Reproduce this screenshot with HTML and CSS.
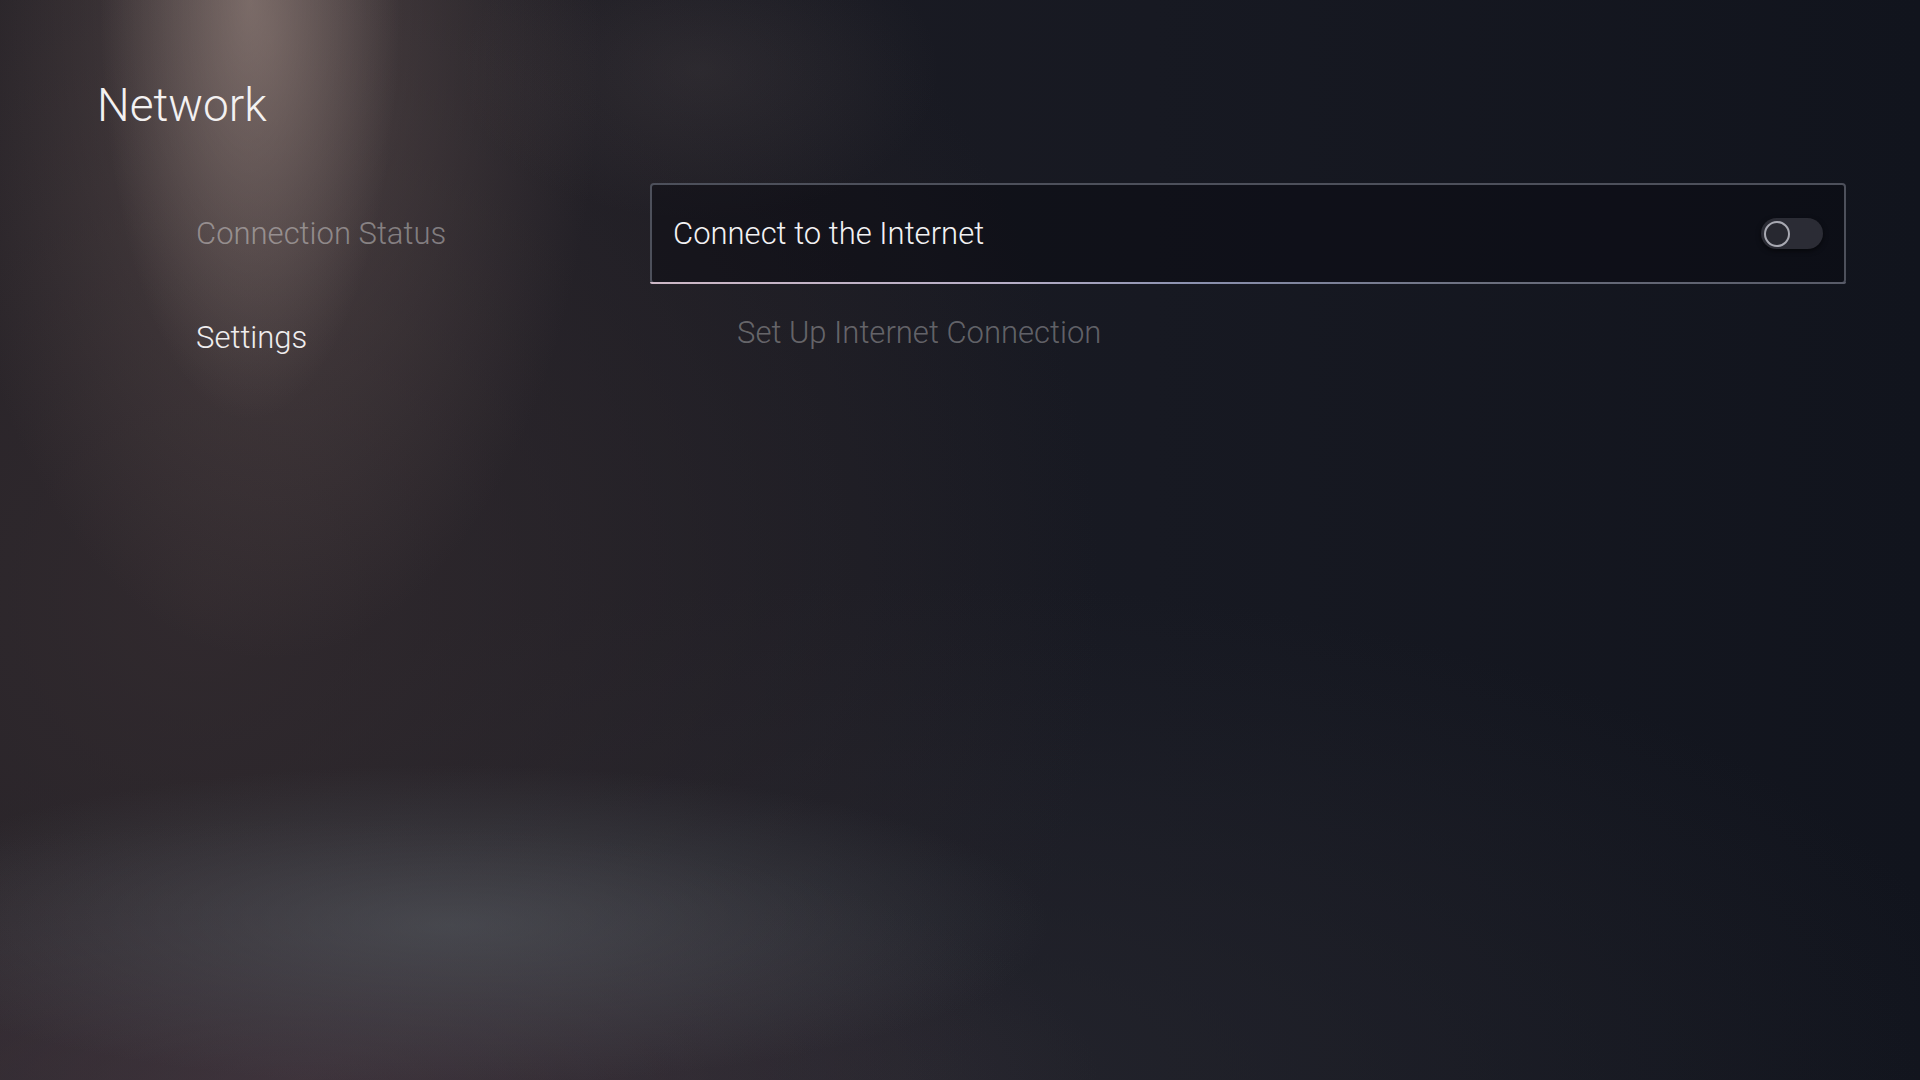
FILE: index.html
```html
<!DOCTYPE html>
<html lang="en">
<head>
    <meta charset="UTF-8">
    <meta name="viewport" content="width=device-width, initial-scale=1.0">
    <title>Network</title>
    <link rel="stylesheet" href="styles.css">
</head>
<body>

    <div class="screen">
        <h1 class="page-title">Network</h1>

        <div class="layout">
            <ul class="side-nav">
                <li class="nav-item dim">Connection Status</li>
                <li class="nav-item active">Settings</li>
            </ul>

            <div class="content">
                <div class="option-row focused">
                    <span class="option-label">Connect to the Internet</span>
                    <span class="toggle"><span class="knob"></span></span>
                </div>
                <div class="option-sub">Set Up Internet Connection</div>
            </div>
        </div>
    </div>

</body>
</html>
```

FILE: styles.css
```css
html, body {
    margin: 0;
    height: 100%;
}
body {
    font-family: Roboto, "Open Sans", "Liberation Sans", sans-serif;
    font-weight: 300;
    color: #f0eff1;
    background-color: #141721;
    background-image:
        radial-gradient(ellipse 150px 420px at 250px 0px, rgba(170,150,142,0.5), rgba(170,150,142,0) 100%),
        radial-gradient(ellipse 330px 620px at 270px 40px, rgba(120,100,96,0.5), rgba(120,100,96,0) 100%),
        radial-gradient(ellipse 240px 150px at 700px 70px, rgba(120,106,104,0.16), rgba(120,106,104,0) 100%),
        radial-gradient(ellipse 600px 160px at 450px 925px, rgba(92,100,106,0.5), rgba(92,100,106,0) 100%),
        radial-gradient(ellipse 800px 260px at 300px 1080px, rgba(80,64,74,0.55), rgba(80,64,74,0) 100%),
        radial-gradient(ellipse 900px 900px at 200px 600px, rgba(52,44,48,0.85), rgba(52,44,48,0) 100%),
        radial-gradient(ellipse 1100px 500px at 900px 1080px, rgba(40,40,48,0.7), rgba(40,40,48,0) 100%),
        linear-gradient(90deg, #1f1d23 0%, #171922 60%, #11141d 100%);
    overflow: hidden;
}
.screen {
    padding: 0 74px 0 97px;
}
.page-title {
    margin: 77px 0 0;
    font-size: 46px;
    font-weight: 300;
    line-height: 56px;
    color: #f3f1f1;
}
.layout {
    display: flex;
    margin-top: 50px;
}
.side-nav {
    list-style: none;
    margin: 0;
    padding: 33px 0 0 99px;
    width: 454px;
    flex-shrink: 0;
    display: flex;
    flex-direction: column;
    gap: 68px;
}
.nav-item {
    font-size: 31px;
    line-height: 36px;
}
.nav-item.dim {
    color: rgba(255,255,255,0.38);
}
.nav-item.active {
    color: #efedee;
}
.content {
    flex: 1;
}
.option-row {
    position: relative;
    display: flex;
    align-items: center;
    justify-content: space-between;
    height: 97px;
    padding: 0 21px 0 21px;
    border: 2px solid #4d505b;
    border-radius: 4px;
    background-color: rgba(6,7,14,0.42);
}
.option-row::after {
    content: '';
    position: absolute;
    left: -2px;
    right: -2px;
    bottom: -2px;
    height: 2px;
    border-radius: 0 0 4px 4px;
    background: linear-gradient(90deg, #cdb8c6 0%, #b6aec6 30%, #8c92b0 45%, #6b6f7e 70%, #585b68 100%);
}
.option-label {
    font-size: 31px;
    line-height: 36px;
    color: #f3f2f4;
}
.toggle {
    display: flex;
    align-items: center;
    width: 62px;
    height: 31px;
    border-radius: 16px;
    background-color: #2b2c35;
    box-shadow: 0 2px 5px rgba(0,0,0,0.55);
}
.knob {
    width: 22px;
    height: 22px;
    margin-left: 3px;
    border: 2px solid #a8a9b2;
    border-radius: 50%;
    background-color: #272830;
}
.option-sub {
    margin-top: 31px;
    padding-left: 87px;
    font-size: 31px;
    line-height: 36px;
    color: rgba(255,255,255,0.33);
}
```
